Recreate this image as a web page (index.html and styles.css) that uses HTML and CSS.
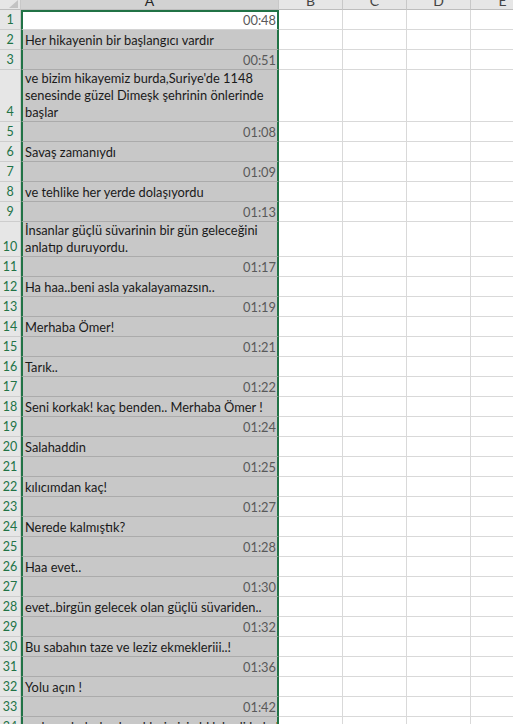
FILE: index.html
```html
<!DOCTYPE html>
<html lang="tr">
<head>
<meta charset="utf-8">
<title>Altyazı - Sayfa1</title>
<link rel="stylesheet" href="styles.css">
</head>
<body>
<div class="sheet">
  <div class="head">
    <div class="corner"><svg class="select-all" width="9" height="8" viewBox="0 0 9 8"><polygon points="9,0 9,8 0,8" fill="#c3c3c3"/></svg></div>
    <div class="ch ch-sel"><span>A</span></div>
    <div class="ch"><span>B</span></div>
    <div class="ch"><span>C</span></div>
    <div class="ch"><span>D</span></div>
    <div class="ch"><span>E</span></div>
  </div>

  <div class="row"><div class="rh">1</div><div class="a t active">00:48</div><div class="rest"></div></div>
  <div class="row"><div class="rh">2</div><div class="a">Her hikayenin bir başlangıcı vardır</div><div class="rest"></div></div>
  <div class="row"><div class="rh">3</div><div class="a t">00:51</div><div class="rest"></div></div>
  <div class="row"><div class="rh">4</div><div class="a">ve bizim hikayemiz burda,Suriye'de 1148<br>senesinde güzel Dimeşk şehrinin önlerinde<br>başlar</div><div class="rest"></div></div>
  <div class="row"><div class="rh">5</div><div class="a t">01:08</div><div class="rest"></div></div>
  <div class="row"><div class="rh">6</div><div class="a">Savaş zamanıydı</div><div class="rest"></div></div>
  <div class="row"><div class="rh">7</div><div class="a t">01:09</div><div class="rest"></div></div>
  <div class="row"><div class="rh">8</div><div class="a">ve tehlike her yerde dolaşıyordu</div><div class="rest"></div></div>
  <div class="row"><div class="rh">9</div><div class="a t">01:13</div><div class="rest"></div></div>
  <div class="row"><div class="rh">10</div><div class="a">İnsanlar güçlü süvarinin bir gün geleceğini<br>anlatıp duruyordu.</div><div class="rest"></div></div>
  <div class="row"><div class="rh">11</div><div class="a t">01:17</div><div class="rest"></div></div>
  <div class="row"><div class="rh">12</div><div class="a">Ha haa..beni asla yakalayamazsın..</div><div class="rest"></div></div>
  <div class="row"><div class="rh">13</div><div class="a t">01:19</div><div class="rest"></div></div>
  <div class="row"><div class="rh">14</div><div class="a">Merhaba Ömer!</div><div class="rest"></div></div>
  <div class="row"><div class="rh">15</div><div class="a t">01:21</div><div class="rest"></div></div>
  <div class="row"><div class="rh">16</div><div class="a">Tarık..</div><div class="rest"></div></div>
  <div class="row"><div class="rh">17</div><div class="a t">01:22</div><div class="rest"></div></div>
  <div class="row"><div class="rh">18</div><div class="a">Seni korkak! kaç benden.. Merhaba Ömer !</div><div class="rest"></div></div>
  <div class="row"><div class="rh">19</div><div class="a t">01:24</div><div class="rest"></div></div>
  <div class="row"><div class="rh">20</div><div class="a">Salahaddin</div><div class="rest"></div></div>
  <div class="row"><div class="rh">21</div><div class="a t">01:25</div><div class="rest"></div></div>
  <div class="row"><div class="rh">22</div><div class="a">kılıcımdan kaç!</div><div class="rest"></div></div>
  <div class="row"><div class="rh">23</div><div class="a t">01:27</div><div class="rest"></div></div>
  <div class="row"><div class="rh">24</div><div class="a">Nerede kalmıştık?</div><div class="rest"></div></div>
  <div class="row"><div class="rh">25</div><div class="a t">01:28</div><div class="rest"></div></div>
  <div class="row"><div class="rh">26</div><div class="a">Haa evet..</div><div class="rest"></div></div>
  <div class="row"><div class="rh">27</div><div class="a t">01:30</div><div class="rest"></div></div>
  <div class="row"><div class="rh">28</div><div class="a">evet..birgün gelecek olan güçlü süvariden..</div><div class="rest"></div></div>
  <div class="row"><div class="rh">29</div><div class="a t">01:32</div><div class="rest"></div></div>
  <div class="row"><div class="rh">30</div><div class="a">Bu sabahın taze ve leziz ekmekleriii..!</div><div class="rest"></div></div>
  <div class="row"><div class="rh">31</div><div class="a t">01:36</div><div class="rest"></div></div>
  <div class="row"><div class="rh">32</div><div class="a">Yolu açın !</div><div class="rest"></div></div>
  <div class="row"><div class="rh">33</div><div class="a t">01:42</div><div class="rest"></div></div>
  <div class="row"><div class="rh">34</div><div class="a">ve bu sabah da ekmeklerimizi aldık hadi bakalım</div><div class="rest"></div></div>
  <div class="row"><div class="rh">35</div><div class="a t">01:45</div><div class="rest"></div></div>
</div>
</body>
</html>
```

FILE: styles.css
```css
* {
  box-sizing: border-box;
}

html,
body {
  margin: 0;
  overflow: hidden;
  background: #ffffff;
}

body {
  font-family: Lato, "Open Sans", "Liberation Sans", sans-serif;
}

.sheet {
  width: 535px;
}

/* column letters strip */
.head {
  display: grid;
  grid-template-columns: 21px 258px repeat(4, 64px);
  height: 10px;
}

.corner {
  background: #e6e6e6;
  border-right: 1px solid #c8c8c8;
  border-bottom: 1px solid #bdbdbd;
  display: flex;
  align-items: flex-end;
  justify-content: flex-end;
  padding: 0 2px 1px 0;
}

.select-all {
  display: block;
}

.ch {
  background: #e6e6e6;
  border-right: 1px solid #c8c8c8;
  border-bottom: 1px solid #bdbdbd;
  display: flex;
  align-items: flex-end;
  justify-content: center;
  overflow: hidden;
  color: #444444;
  font-size: 14px;
}

.ch span {
  line-height: 14px;
  margin-bottom: 1px;
}

.ch-sel {
  background: #d2d2d2;
  color: #262626;
}

/* one worksheet row */
.row {
  display: grid;
  grid-template-columns: 21px 258px 256px;
}

.rh {
  background: #e6e6e6;
  border-right: 1px solid #c8c8c8;
  border-bottom: 1px solid #cdcdcd;
  color: #217346;
  font-size: 12.5px;
  line-height: 17px;
  display: flex;
  align-items: flex-end;
  justify-content: center;
  padding-bottom: 1px;
}

/* column A: selected, so shaded and framed in green */
.a {
  min-height: 20px;
  background: #c8c8c8;
  border-left: 2px solid #217346;
  border-right: 2px solid #217346;
  border-bottom: 1px solid #ababab;
  padding: 0 2px 0 2px;
  font-size: 12.85px;
  line-height: 17px;
  color: #1a1a1a;
  white-space: nowrap;
  overflow: hidden;
  display: flex;
  flex-direction: column;
  justify-content: flex-end;
}

.a.t {
  text-align: right;
  color: #595959;
  padding-right: 1px;
}

.a.active {
  background: #ffffff;
  border-top: 2px solid #217346;
  border-bottom-color: #d4d4d4;
}

/* empty columns B..E */
.rest {
  border-bottom: 1px solid #d9d9d9;
  background-image: repeating-linear-gradient(to right, transparent 0 63px, #d9d9d9 63px 64px);
}
```
